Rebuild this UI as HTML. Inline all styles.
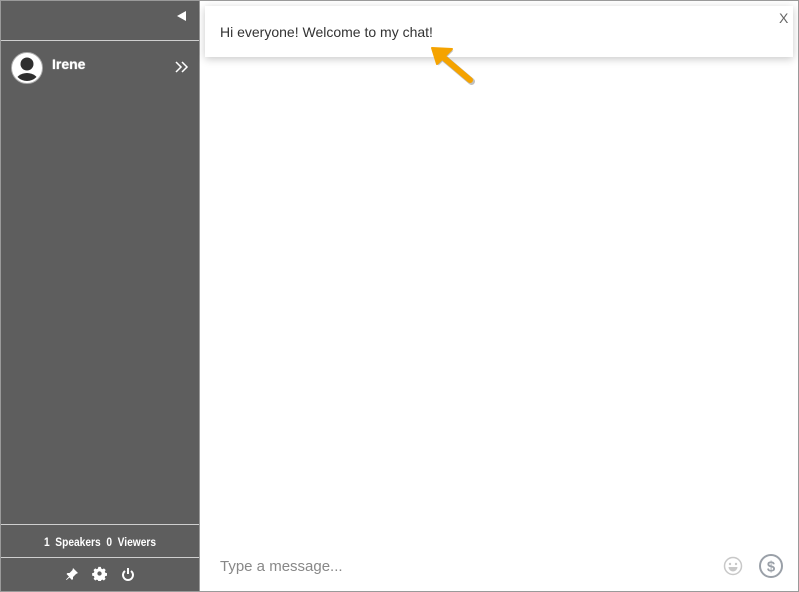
<!DOCTYPE html>
<html><head><meta charset="utf-8"><style>
*{margin:0;padding:0;box-sizing:border-box}
html,body{width:799px;height:592px;overflow:hidden;background:#fff;font-family:"Liberation Sans",sans-serif}
.frame{position:absolute;left:0;top:0;width:799px;height:592px;border:1px solid #9a9a9a}
.side{position:absolute;left:1px;top:1px;width:198px;height:590px;background:#5e5e5e}
.hl{position:absolute;left:0;width:198px;height:1px;background:#cfcfcf}
.main{position:absolute;left:199px;top:1px;width:1px;height:590px;background:#9a9a9a}
.popup{position:absolute;left:205px;top:6px;width:588px;height:51px;background:#fff;box-shadow:0 2px 8px rgba(0,0,0,.22)}
</style></head><body>
<div class="side">
  <div style="position:absolute;left:176px;top:10px;width:0;height:0;border-top:5px solid transparent;border-bottom:5px solid transparent;border-right:9px solid #fff"></div>
  <div class="hl" style="top:39px"></div>
  <svg style="position:absolute;left:9px;top:50px" width="34" height="34" viewBox="0 0 34 34">
    <circle cx="17" cy="17" r="15.5" fill="#fff" stroke="#aaa" stroke-width="1"/>
    <clipPath id="c"><circle cx="17" cy="17" r="13"/></clipPath>
    <g clip-path="url(#c)" fill="#2f2f2f"><circle cx="17" cy="13" r="6.5"/><ellipse cx="17" cy="32" rx="12" ry="10"/></g>
  </svg>
  <div style="position:absolute;left:51px;top:55px;color:#fff;font-weight:bold;font-size:14px;text-shadow:0 0 1px #fff">Irene</div>
  <svg style="position:absolute;left:174px;top:60px" width="14" height="12" viewBox="0 0 14 12"><path d="M1 1l5 5-5 5M7 1l5 5-5 5" fill="none" stroke="#fff" stroke-width="1.5"/></svg>
  <div class="hl" style="top:523px"></div>
  <div style="position:absolute;left:0;width:198px;top:534px;text-align:center;color:#fff;font-weight:bold;font-size:12px;transform:scaleX(.85);white-space:nowrap">1&nbsp; Speakers&nbsp; 0&nbsp; Viewers</div>
  <div class="hl" style="top:556px"></div>
  <svg style="position:absolute;left:64px;top:566px" width="14" height="14" viewBox="0 0 14 14"><path d="M8 1l5 5-2 1-3 3 0 2-1 1-2.5-2.5L1.5 13 1 12.5 4 9.5 1.5 7l1-1h2l3-3z" fill="#fff"/></svg>
  <svg style="position:absolute;left:91px;top:565px" width="15" height="15" viewBox="0 0 16 16"><path d="M6.5 1h3l.4 2 1.5.8 1.8-1 2 2-1 1.8.6 1.4 2 .5v3l-2 .4-.7 1.5 1 1.8-2 2-1.7-1-1.5.6-.4 2h-3l-.4-2-1.5-.6-1.7 1-2-2 1-1.8-.7-1.5-2-.4v-3l2-.5.6-1.4-1-1.8 2-2 1.8 1 1.5-.8z" fill="#fff" transform="scale(.9) translate(1 0)"/><circle cx="8" cy="8" r="2.3" fill="#5e5e5e"/></svg>
  <svg style="position:absolute;left:120px;top:566px" width="14" height="14" viewBox="0 0 14 14"><path d="M4 4a5 5 0 1 0 6 0" fill="none" stroke="#fff" stroke-width="2"/><path d="M7 1v6" stroke="#fff" stroke-width="2"/></svg>
</div>
<div class="main"></div>
<div class="popup">
  <div style="position:absolute;left:15px;top:18px;font-size:14px;color:#333">Hi everyone! Welcome to my chat!</div>
  <div style="position:absolute;left:574px;top:4px;font-size:14px;color:#666">X</div>
</div>
<svg style="position:absolute;left:428px;top:44px" width="50" height="44" viewBox="0 0 50 44">
  <g transform="translate(1.5 1.5)" opacity=".3"><path d="M42 36L16 14" stroke="#333" stroke-width="7" stroke-linecap="round"/><path d="M4 4l20 1-15 15z" fill="#333"/></g>
  <path d="M42 36L16 14" stroke="#f5a300" stroke-width="6" stroke-linecap="round"/>
  <path d="M4 4l20 1-15 15z" fill="#f5a300" stroke="#f5a300" stroke-width="2" stroke-linejoin="round"/>
</svg>
<div style="position:absolute;left:220px;top:558px;font-size:15px;color:#888">Type a message...</div>
<svg style="position:absolute;left:723px;top:556px" width="20" height="20" viewBox="0 0 20 20"><circle cx="10" cy="10" r="8.5" fill="none" stroke="#c8c8c8" stroke-width="1.5"/><circle cx="7" cy="8" r="1.2" fill="#c8c8c8"/><circle cx="13" cy="8" r="1.2" fill="#c8c8c8"/><path d="M5.5 11h9a4.5 4.5 0 0 1-9 0z" fill="#c8c8c8"/></svg>
<svg style="position:absolute;left:758px;top:553px" width="26" height="26" viewBox="0 0 26 26"><circle cx="13" cy="13" r="11" fill="none" stroke="#9aa0a8" stroke-width="2"/><text x="13" y="18.5" text-anchor="middle" font-family="Liberation Sans" font-weight="bold" font-size="15" fill="#9aa0a8">$</text></svg>
<div class="frame"></div>
</body></html>
